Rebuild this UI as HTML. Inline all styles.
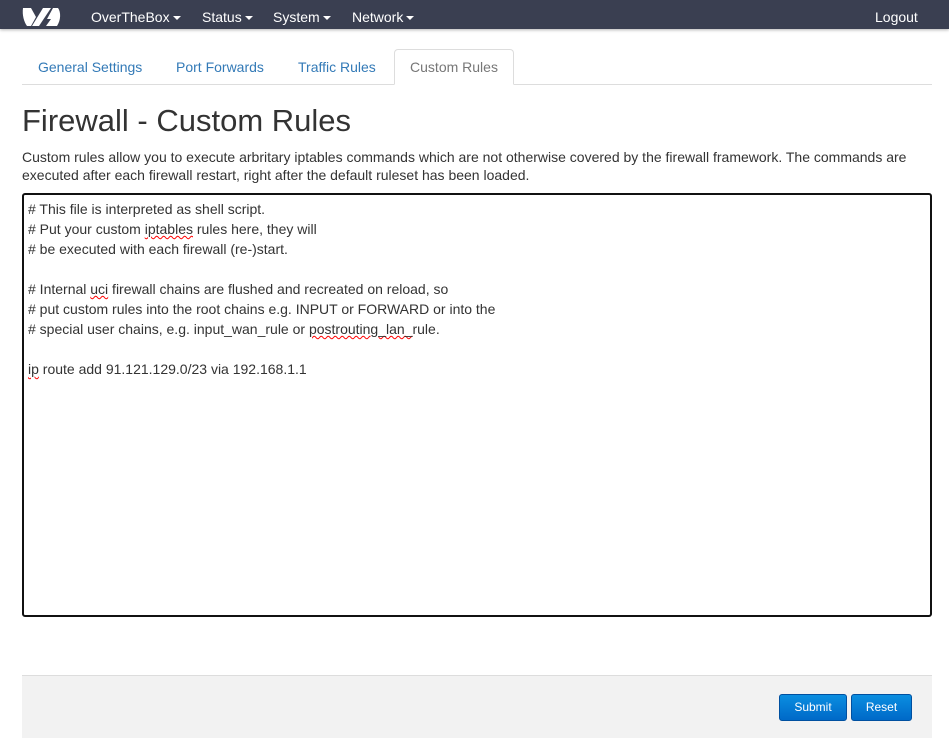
<!DOCTYPE html>
<html><head><meta charset="utf-8"><style>
*{box-sizing:border-box}
body{margin:0;font-family:"Liberation Sans",sans-serif;background:#fff;color:#333;font-size:14px;width:949px;height:745px;overflow:hidden}
.nav{height:29px;background:#3a3f51;position:relative;color:#fff;box-shadow:0 1px 3px rgba(0,0,0,.3)}
.nav span{position:absolute;top:9px;font-size:14px}
.car{display:inline-block;border-left:4px solid transparent;border-right:4px solid transparent;border-top:4px solid #fff;vertical-align:middle;margin-left:3px}
.tabs{position:absolute;top:49px;left:22px;width:910px;height:36px;border-bottom:1px solid #ddd}
.tabs span{position:absolute;top:10px;color:#337ab7;font-size:14px}
.act{position:absolute;left:372px;top:0;width:120px;height:36px;border:1px solid #ddd;border-bottom:1px solid #fff;border-radius:4px 4px 0 0;background:#fff;color:#777;text-align:center;padding-top:9px}
h1{position:absolute;left:22px;top:103px;margin:0;font-weight:normal;font-size:31px;color:#333}
.desc{position:absolute;left:22px;top:148px;width:910px;line-height:18px;font-size:14px}
.ta{position:absolute;left:22px;top:193px;width:910px;height:424px;border:2px solid #111;border-radius:3px;padding:4px 4px;line-height:20px;font-size:14px;white-space:pre}
.sp{text-decoration:underline wavy red;text-decoration-thickness:1px}
.foot{position:absolute;left:22px;top:675px;width:910px;height:63px;background:#f2f2f2;border-top:1px solid #ddd}
.btn{position:absolute;top:18px;height:27px;border:1px solid #0050a0;border-radius:3px;background:linear-gradient(#0a8ee0,#0069c8);color:#fff;font-size:12px;text-align:center;line-height:25px}
</style></head><body>
<div class="nav">
<svg style="position:absolute;left:22px;top:5px" width="40" height="22" viewBox="0 0 40 22"><path d="M1 3h8l5 9-5 9H5C2 17 0 10 1 3z" fill="#fff"/><path d="M21 3h8L17 21h-7z" fill="#fff"/><path d="M31 3h5c3 4 3 12-1 18h-11l5-7h-4z" fill="#fff"/></svg>
<span style="left:91px">OverTheBox<i class="car"></i></span>
<span style="left:202px">Status<i class="car"></i></span>
<span style="left:273px">System<i class="car"></i></span>
<span style="left:352px">Network<i class="car"></i></span>
<span style="left:875px">Logout</span>
</div>
<div class="tabs">
<span style="left:16px">General Settings</span>
<span style="left:154px">Port Forwards</span>
<span style="left:276px">Traffic Rules</span>
<div class="act">Custom Rules</div>
</div>
<h1>Firewall - Custom Rules</h1>
<div class="desc">Custom rules allow you to execute arbritary iptables commands which are not otherwise covered by the firewall framework. The commands are executed after each firewall restart, right after the default ruleset has been loaded.</div>
<div class="ta"># This file is interpreted as shell script.
# Put your custom <span class="sp">iptables</span> rules here, they will
# be executed with each firewall (re-)start.

# Internal <span class="sp">uci</span> firewall chains are flushed and recreated on reload, so
# put custom rules into the root chains e.g. INPUT or FORWARD or into the
# special user chains, e.g. input_wan_rule or <span class="sp">postrouting_lan_</span>rule.

<span class="sp">ip</span> route add 91.121.129.0/23 via 192.168.1.1</div>
<div class="foot">
<div class="btn" style="left:757px;width:68px">Submit</div>
<div class="btn" style="left:829px;width:61px">Reset</div>
</div>
</body></html>
